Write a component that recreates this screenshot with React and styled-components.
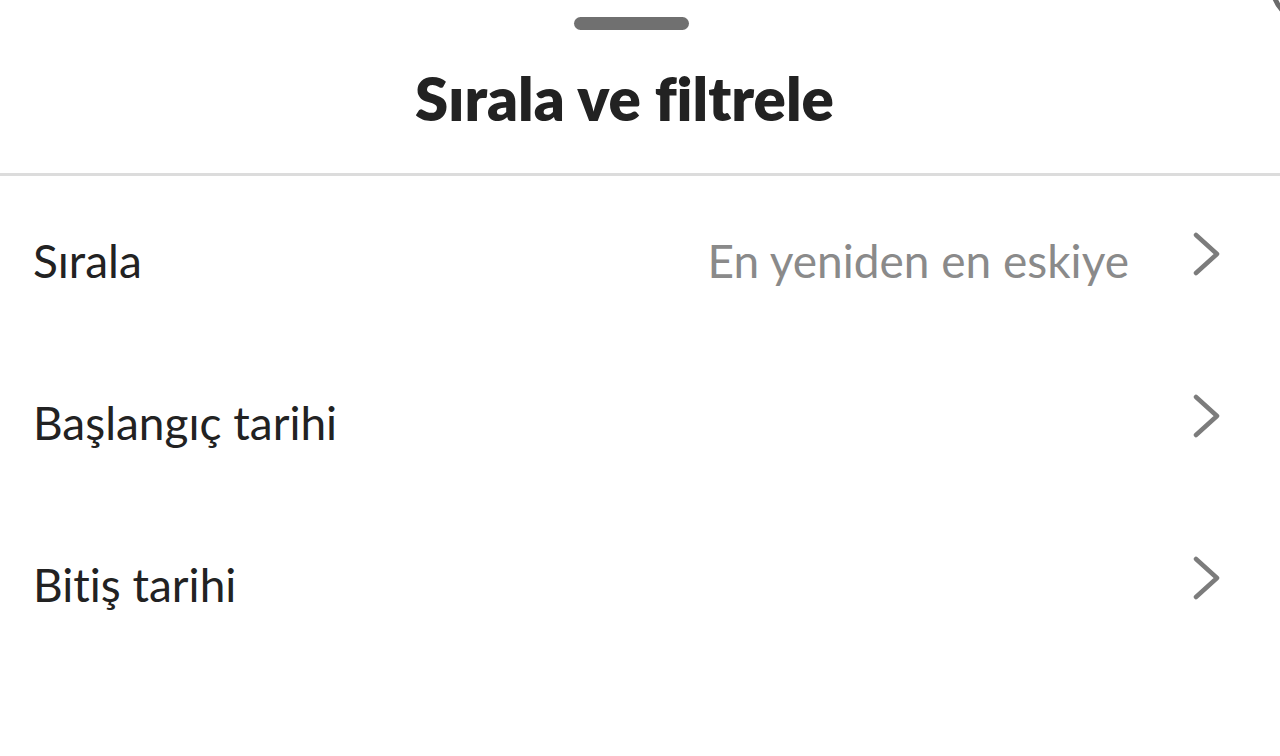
import React from "react";
import styled, { createGlobalStyle } from "styled-components";

const Global = createGlobalStyle`
  html, body { margin: 0; padding: 0; background: #ffffff; }
  body {
    font-family: "Lato", "Open Sans", sans-serif;
    font-variant-ligatures: none;
  }
`;

const Sheet = styled.div`
  position: relative;
  width: 1280px;
  height: 756px;
  background: #fff;
  overflow: hidden;
`;

const Header = styled.div`
  display: flex;
  flex-direction: column;
  align-items: center;
  height: 173px;
  padding-right: 17px;
  border-bottom: 3px solid #dcdcdc;
  box-sizing: content-box;
`;

const Handle = styled.div`
  width: 115px;
  height: 13px;
  border-radius: 7px;
  background: #707070;
  margin-top: 17px;
`;

const Title = styled.h1`
  margin: 38px 14px 0 0;
  font-family: "Lato", sans-serif;
  font-weight: 800;
  font-size: 60px;
  line-height: 1;
  color: #222;
  letter-spacing: 0;
  font-variant-ligatures: none;
`;

const List = styled.div`
  display: flex;
  flex-direction: column;
  padding-top: 3px;
`;

const Row = styled.div`
  display: flex;
  align-items: center;
  height: 162px;
  padding: 0 58px 0 33px;
`;

const Label = styled.span`
  flex: 1;
  font-size: 46px;
  color: #222;
  font-weight: 400;
`;

const Value = styled.span`
  font-size: 46px;
  color: #8a8a8a;
  margin-right: 63px;
`;

const Chevron = styled.svg`
  width: 30px;
  height: 44px;
  margin-top: -12px;
  flex: none;
`;

const Corner = styled.div`
  position: absolute;
  top: -55px;
  left: 1270px;
  width: 80px;
  height: 80px;
  border-radius: 50%;
  border: 5px solid #6a6a6a;
  box-sizing: border-box;
`;

const Arrow = () => (
  <Chevron viewBox="0 0 30 44">
    <path d="M4 3 L25 22 L4 41" fill="none" stroke="#7c7c7c" strokeWidth="4.5" strokeLinecap="round" strokeLinejoin="round" />
  </Chevron>
);

const items = [
  { label: "Sırala", value: "En yeniden en eskiye" },
  { label: "Başlangıç tarihi" },
  { label: "Bitiş tarihi" },
];

export default function App() {
  return (
    <Sheet>
      <Global />
      <Corner />
      <Header>
        <Handle />
        <Title>Sırala ve filtrele</Title>
      </Header>
      <List>
        {items.map((it) => (
          <Row key={it.label}>
            <Label>{it.label}</Label>
            {it.value && <Value>{it.value}</Value>}
            <Arrow />
          </Row>
        ))}
      </List>
    </Sheet>
  );
}
